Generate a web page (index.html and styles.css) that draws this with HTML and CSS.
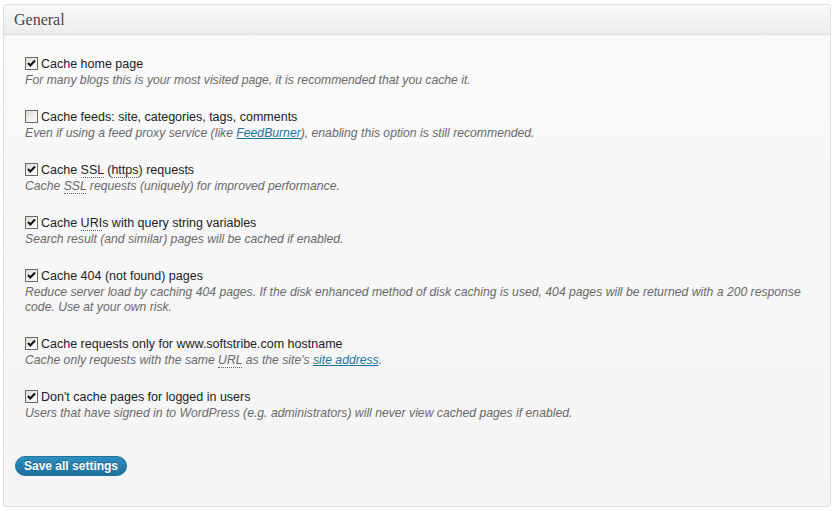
FILE: index.html
```html
<!DOCTYPE html>
<html lang="en">
<head>
    <meta charset="UTF-8">
    <title>General settings</title>
    <link rel="stylesheet" href="styles.css">
</head>
<body>
    <div class="postbox">
        <h3 class="hndle">General</h3>
        <div class="inside">
            <ul class="options">
                <li>
                    <label><span class="check on"></span>Cache home page</label>
                    <span class="description">For many blogs this is your most visited page, it is recommended that you cache it.</span>
                </li>
                <li>
                    <label><span class="check"></span>Cache feeds: site, categories, tags, comments</label>
                    <span class="description">Even if using a feed proxy service (like <a href="#">FeedBurner</a>), enabling this option is still recommended.</span>
                </li>
                <li>
                    <label><span class="check on"></span>Cache <abbr>SSL</abbr> (<abbr>https</abbr>) requests</label>
                    <span class="description">Cache <abbr>SSL</abbr> requests (uniquely) for improved performance.</span>
                </li>
                <li>
                    <label><span class="check on"></span>Cache <abbr>URI</abbr>s with query string variables</label>
                    <span class="description">Search result (and similar) pages will be cached if enabled.</span>
                </li>
                <li>
                    <label><span class="check on"></span>Cache 404 (not found) pages</label>
                    <span class="description">Reduce server load by caching 404 pages. If the disk enhanced method of disk caching is used, 404 pages will be returned with a 200 response code. Use at your own risk.</span>
                </li>
                <li>
                    <label><span class="check on"></span>Cache requests only for www.softstribe.com hostname</label>
                    <span class="description">Cache only requests with the same <abbr>URL</abbr> as the site's <a href="#">site address</a>.</span>
                </li>
                <li>
                    <label><span class="check on"></span>Don't cache pages for logged in users</label>
                    <span class="description">Users that have signed in to WordPress (e.g. administrators) will never view cached pages if enabled.</span>
                </li>
            </ul>
            <p class="submit">
                <button class="button-primary">Save all settings</button>
            </p>
        </div>
    </div>
</body>
</html>
```

FILE: styles.css
```css
body {
    margin: 0;
    padding: 4px 5px 0 3px;
    background-color: #fff;
    font-family: "Liberation Sans", Arial, sans-serif;
    font-size: 13px;
    color: #333;
}
.postbox {
    border: 1px solid #dfdfdf;
    border-radius: 3px;
    background: linear-gradient(to bottom, #f9f9f9, #f4f4f4);
    box-shadow: 0 1px 0 #fff inset;
    height: 503px;
    box-sizing: border-box;
}
.hndle {
    margin: 0;
    height: 29px;
    line-height: 29px;
    padding: 0 10px;
    font-family: "Liberation Serif", Georgia, serif;
    font-size: 16px;
    font-weight: normal;
    color: #464646;
    background: linear-gradient(to bottom, #f9f9f9, #ececec);
    border-bottom: 1px solid #dfdfdf;
    border-radius: 3px 3px 0 0;
}
.inside {
    padding: 21px 0 0 11px;
}
.options {
    list-style: none;
    margin: 0;
    padding: 0 15px 0 10px;
}
.options li {
    margin-bottom: 21px;
}
.options li:nth-child(n+3) {
    margin-top: 1px;
}
.options label {
    display: block;
    height: 17px;
    line-height: 17px;
    font-size: 12.5px;
    color: #222;
}
.check {
    display: inline-block;
    vertical-align: -2px;
    width: 11px;
    height: 11px;
    margin-right: 3px;
    border: 1px solid #6a6a6a;
    background: linear-gradient(135deg, #dcdcd6, #fff);
}
.check.on {
    background-image: url("data:image/svg+xml;utf8,<svg xmlns='http://www.w3.org/2000/svg' width='11' height='11' viewBox='0 0 11 11'><path d='M2 5 L4.3 7.5 L9 2.5' fill='none' stroke='%23111' stroke-width='2'/></svg>"), linear-gradient(135deg, #dcdcd6, #fff);
}
.description {
    display: block;
    line-height: 15px;
    font-size: 12.2px;
    font-style: italic;
    color: #6a6a6a;
}
abbr {
    text-decoration: none;
    border-bottom: 1px dotted #666;
}
a {
    color: #21759b;
}
.submit {
    margin: 35px 0 0;
}
.button-primary {
    height: 20px;
    padding: 0 8px;
    border: 1px solid #21759b;
    border-radius: 11px;
    background: linear-gradient(to bottom, #2e8ec1, #1f6f9b);
    color: #fff;
    font-family: "Liberation Sans", Arial, sans-serif;
    font-size: 12px;
    font-weight: bold;
    text-shadow: 0 -1px 0 rgba(0,0,0,0.3);
    cursor: pointer;
}
```
